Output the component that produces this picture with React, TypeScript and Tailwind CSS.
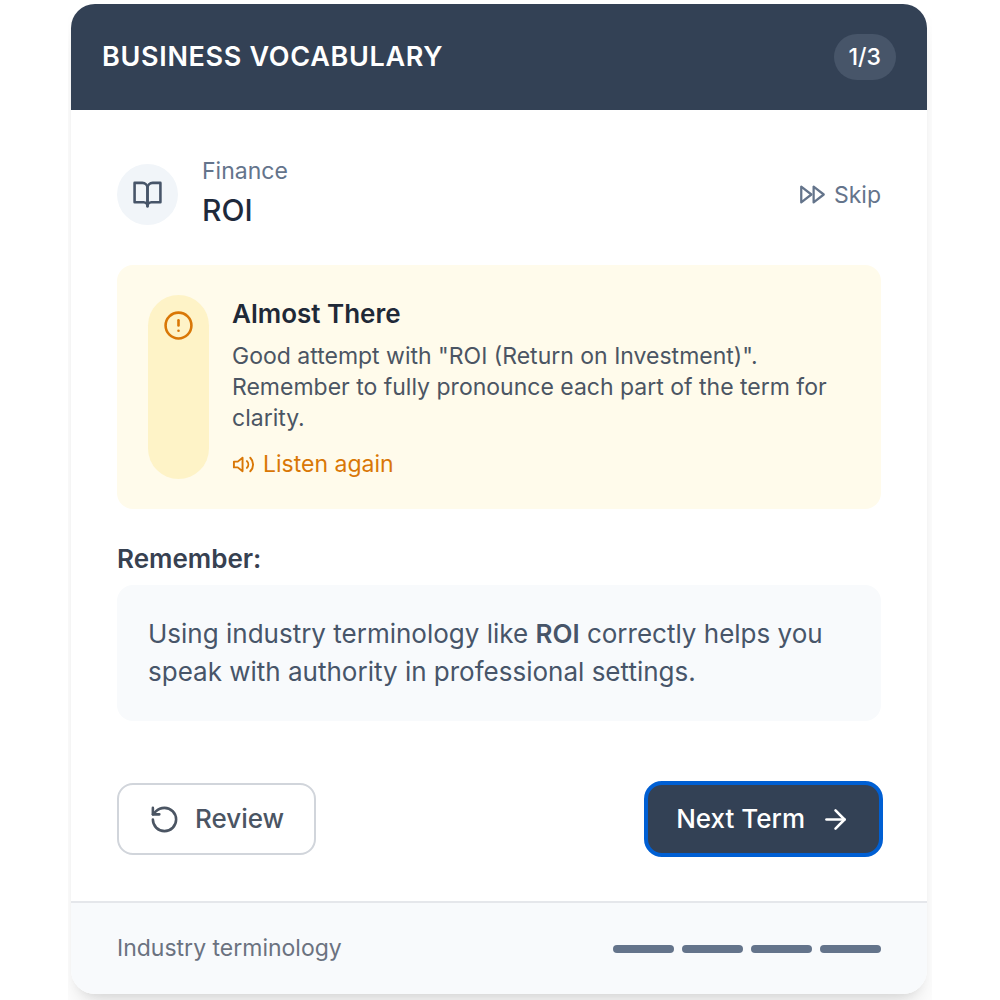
import type { ReactNode } from "react";

function Icon({ size, children }: { size: number; children: ReactNode }) {
  return (
    <svg
      width={size}
      height={size}
      viewBox="0 0 24 24"
      fill="none"
      stroke="currentColor"
      strokeWidth="2"
      strokeLinecap="round"
      strokeLinejoin="round"
      aria-hidden="true"
      className="shrink-0"
    >
      {children}
    </svg>
  );
}

const steps = [1, 2, 3, 4];

export default function App() {
  return (
    <main className="min-h-screen bg-white px-[68px] font-['Inter',sans-serif]">
      <div className="overflow-hidden pt-1 pr-[5px] pb-1.5 pl-[3px]">
        <article className="overflow-hidden rounded-3xl bg-white shadow-[0_19px_29px_-6px_rgba(0,0,0,0.1),0_8px_11px_-7px_rgba(0,0,0,0.1)]">
          <header className="flex items-center justify-between bg-[#334155] px-[31px] py-[30px]">
            <h1 className="text-[27px] leading-[38px] font-semibold tracking-wide text-white uppercase">Business Vocabulary</h1>
            <span className="rounded-full bg-[#475569] px-[15px] py-2 text-[23px] leading-[30px] font-medium text-white">1/3</span>
          </header>

          <div className="px-[46px] pt-[46px] pb-[46px]">
            <div className="mb-8 flex items-center justify-between">
              <div className="flex items-center gap-6">
                <span className="rounded-full bg-[#f1f5f9] p-[15px] text-[#475569]">
                  <Icon size={31}>
                    <path d="M2 3h6a4 4 0 0 1 4 4v14a3 3 0 0 0-3-3H2z" />
                    <path d="M22 3h-6a4 4 0 0 0-4 4v14a3 3 0 0 1 3-3h7z" />
                  </Icon>
                </span>
                <div>
                  <p className="text-[23px] leading-[31px] text-[#64748b]">Finance</p>
                  <h2 className="text-[30px] leading-[46px] font-medium text-[#1e293b]">ROI</h2>
                </div>
              </div>
              <button type="button" className="flex items-center gap-2 text-[23px] leading-[30px] text-[#64748b]">
                <Icon size={27}>
                  <polygon points="13 19 22 12 13 5 13 19" />
                  <polygon points="2 19 11 12 2 5 2 19" />
                </Icon>
                Skip
              </button>
            </div>

            <section className="mb-[31px] flex gap-[23px] rounded-2xl bg-[#fffbeb] px-[31px] py-[30px]">
              <span className="shrink-0 rounded-full bg-[#fef3c7] p-[15px] text-[#d97706]">
                <Icon size={31}>
                  <circle cx="12" cy="12" r="10" />
                  <line x1="12" y1="8" x2="12" y2="12" />
                  <line x1="12" y1="16" x2="12.01" y2="16" />
                </Icon>
              </span>
              <div>
                <h3 className="mb-2 text-[26px] leading-[38px] font-semibold text-[#1f2937]">Almost There</h3>
                <p className="text-[23px] leading-[31px] text-[#4b5563]">
                  Good attempt with "ROI (Return on Investment)". Remember to fully pronounce each part of the term for clarity.
                </p>
                <button type="button" className="mt-[15px] flex items-center gap-2 text-[23px] leading-[30px] text-[#d97706]">
                  <Icon size={23}>
                    <polygon points="11 5 6 9 2 9 2 15 6 15 11 19 11 5" />
                    <path d="M15.54 8.46a5 5 0 0 1 0 7.07" />
                    <path d="M19.07 4.93a10 10 0 0 1 0 14.14" />
                  </Icon>
                  Listen again
                </button>
              </div>
            </section>

            <h3 className="mb-[7px] text-[26px] leading-[38px] font-semibold text-[#374151]">Remember:</h3>
            <p className="rounded-2xl bg-[#f8fafc] px-[31px] py-[30px] text-[26px] leading-[38px] text-[#475569]">
              Using industry terminology like <strong className="font-semibold">ROI</strong> correctly helps you speak with authority in professional settings.
            </p>

            <div className="mt-[62px] flex items-center justify-between">
              <button type="button" className="flex items-center gap-[15px] rounded-2xl border-2 border-[#d1d5db] px-[30px] py-[15px] text-[26px] leading-[38px] font-medium text-[#4b5563]">
                <Icon size={31}>
                  <path d="M3 12a9 9 0 1 0 9-9 9.75 9.75 0 0 0-6.74 2.74L3 8" />
                  <path d="M3 3v5h5" />
                </Icon>
                Review
              </button>
              <button type="button" className="flex items-center gap-[15px] rounded-2xl bg-[#334155] px-[30px] py-[17px] text-[26px] leading-[38px] font-medium text-white outline-4 -outline-offset-2 outline-[#005fd3]">
                Next Term
                <Icon size={31}>
                  <path d="M5 12h14" />
                  <path d="m12 5 7 7-7 7" />
                </Icon>
              </button>
            </div>
          </div>

          <footer className="flex items-center justify-between border-t-2 border-[#e5e7eb] bg-[#f8fafc] px-[46px] py-[30px]">
            <p className="text-[23px] leading-[31px] text-[#6b7280]">Industry terminology</p>
            <div className="flex gap-2">
              {steps.map((step) => (
                <span key={step} className="h-2 w-[61px] rounded-full bg-[#64748b]" />
              ))}
            </div>
          </footer>
        </article>
      </div>
    </main>
  );
}
